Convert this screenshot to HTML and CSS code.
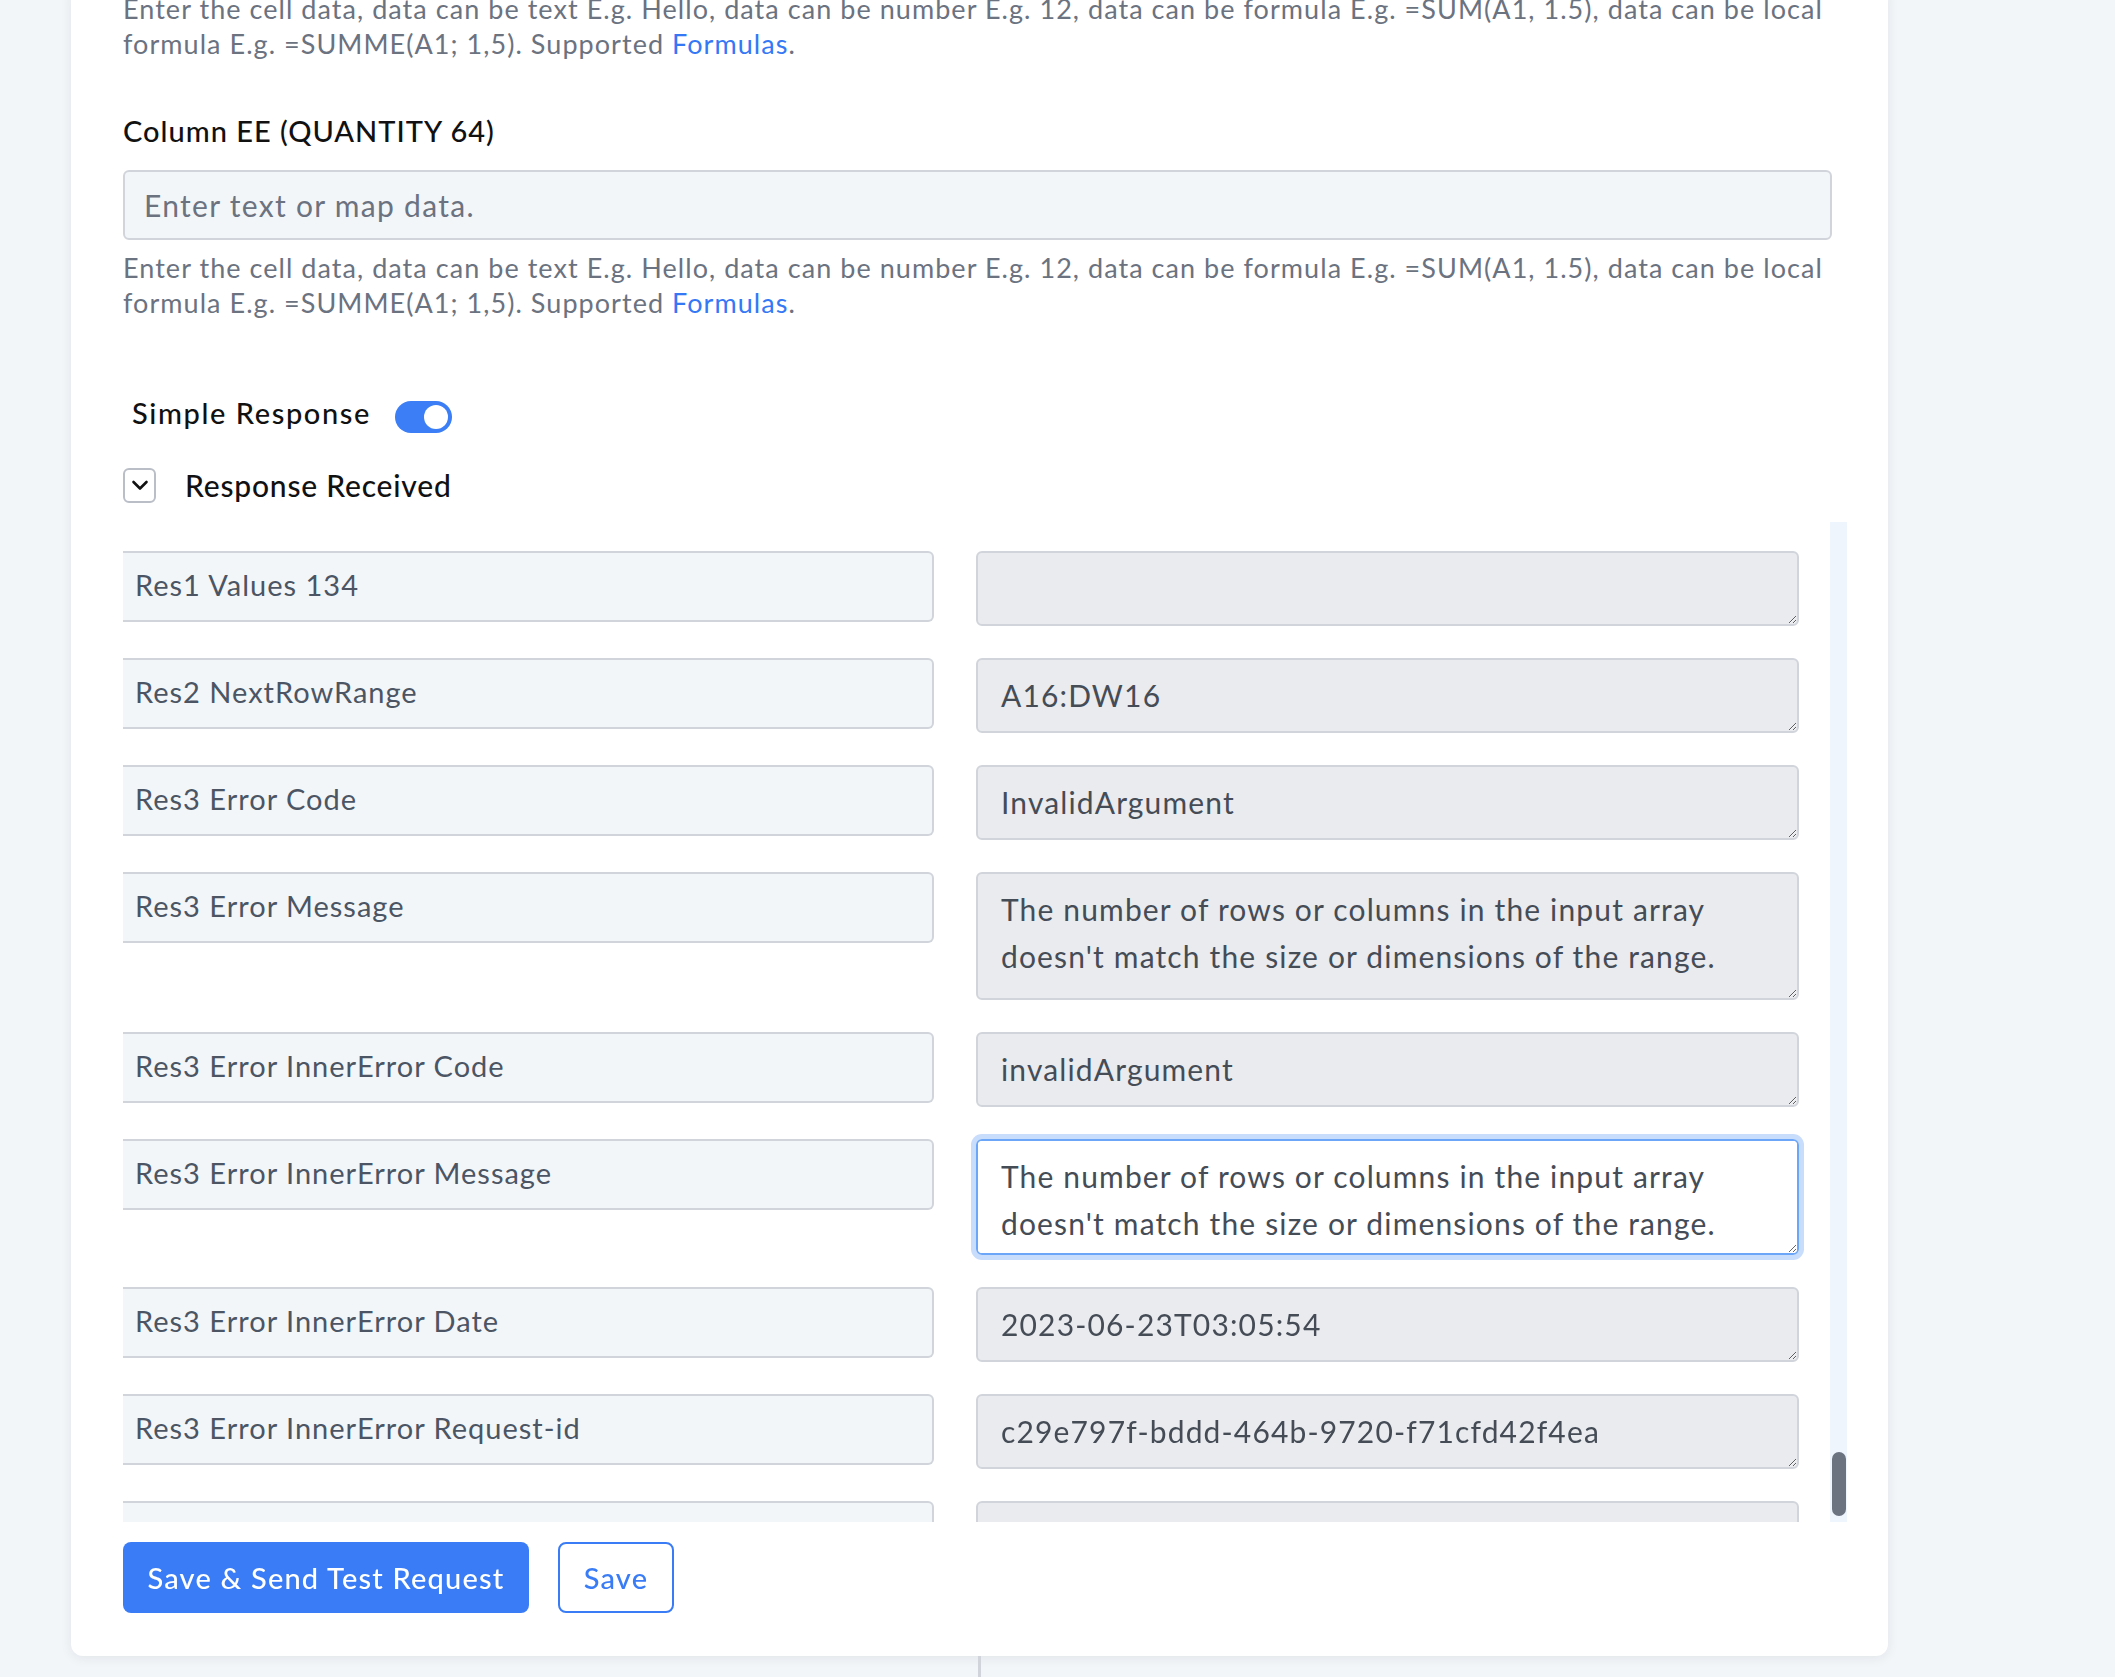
FILE: index.html
```html
<!DOCTYPE html>
<html lang="en">
<head>
  <meta charset="UTF-8">
  <meta name="viewport" content="width=device-width, initial-scale=1.0">
  <title>Update Row - Excel Action</title>
  <link rel="stylesheet" href="styles.css">
</head>
<body>
  <div class="card">
    <p class="help">Enter the cell data, data can be text E.g. Hello, data can be number E.g. 12, data can be formula E.g. =SUM(A1, 1.5), data can be local formula E.g. =SUMME(A1; 1,5). Supported <a href="#">Formulas</a>.</p>

    <label class="field-label" for="col-ee">Column EE (QUANTITY 64)</label>
    <input class="text-input" id="col-ee" type="text" placeholder="Enter text or map data.">
    <p class="help help-after">Enter the cell data, data can be text E.g. Hello, data can be number E.g. 12, data can be formula E.g. =SUM(A1, 1.5), data can be local formula E.g. =SUMME(A1; 1,5). Supported <a href="#">Formulas</a>.</p>

    <div class="toggle-row">
      <span class="toggle-label">Simple Response</span>
      <span class="toggle on"><span class="knob"></span></span>
    </div>

    <div class="section-head">
      <span class="chevron-box">
        <svg width="18" height="18" viewBox="0 0 18 18" fill="none" stroke="#111" stroke-width="2.6" stroke-linecap="round" stroke-linejoin="round"><path d="M2.5 6l6.5 6.5 6.5-6.5"/></svg>
      </span>
      <span class="section-title">Response Received</span>
    </div>

    <div class="response-box">
      <div class="response-list">
        <div class="response-row">
          <input class="key" type="text" value="Res1 Values 134" readonly>
          <textarea class="val" readonly></textarea>
        </div>
        <div class="response-row">
          <input class="key" type="text" value="Res2 NextRowRange" readonly>
          <textarea class="val" readonly>A16:DW16</textarea>
        </div>
        <div class="response-row">
          <input class="key" type="text" value="Res3 Error Code" readonly>
          <textarea class="val" readonly>InvalidArgument</textarea>
        </div>
        <div class="response-row">
          <input class="key" type="text" value="Res3 Error Message" readonly>
          <textarea class="val val-tall" readonly>The number of rows or columns in the input array doesn't match the size or dimensions of the range.</textarea>
        </div>
        <div class="response-row">
          <input class="key" type="text" value="Res3 Error InnerError Code" readonly>
          <textarea class="val" readonly>invalidArgument</textarea>
        </div>
        <div class="response-row">
          <input class="key" type="text" value="Res3 Error InnerError Message" readonly>
          <textarea class="val val-focus" readonly>The number of rows or columns in the input array doesn't match the size or dimensions of the range.</textarea>
        </div>
        <div class="response-row">
          <input class="key" type="text" value="Res3 Error InnerError Date" readonly>
          <textarea class="val" readonly>2023-06-23T03:05:54</textarea>
        </div>
        <div class="response-row">
          <input class="key" type="text" value="Res3 Error InnerError Request-id" readonly>
          <textarea class="val" readonly>c29e797f-bddd-464b-9720-f71cfd42f4ea</textarea>
        </div>
        <div class="response-row">
          <input class="key" type="text" value="Res3 Error InnerError Client-request-id" readonly>
          <textarea class="val" readonly>c29e797f-bddd-464b-9720-f71cfd42f4ea</textarea>
        </div>
      </div>
      <div class="scroll-track"><div class="scroll-thumb"></div></div>
    </div>

    <div class="actions">
      <button class="btn btn-primary" type="button">Save &amp; Send Test Request</button>
      <button class="btn btn-outline" type="button">Save</button>
    </div>
  </div>
  <div class="column-rule"></div>
</body>
</html>
```

FILE: styles.css
```css
body {
  margin: 0;
  background: #f3f6f9;
  font-family: Lato, "Noto Sans", sans-serif;
  color: #111;
  overflow: hidden;
}

.card {
  box-sizing: border-box;
  width: 1817px;
  margin: -9px 0 0 71px;
  padding: 0 56px 43px 52px;
  background: #fff;
  border-radius: 0 0 12px 12px;
  box-shadow: 0 2px 12px rgba(17, 24, 39, 0.08);
}

.help {
  margin: 0;
  font-size: 27px;
  line-height: 35px;
  letter-spacing: 1.05px;
  color: #6b7280;
}
.help a {
  color: #3478f6;
  text-decoration: none;
}
.help-after {
  margin-top: 10px;
}

.field-label {
  display: block;
  margin-top: 50px;
  font-size: 29px;
  line-height: 40px;
  letter-spacing: 1px;
  font-weight: 500;
  color: #111;
}

.text-input {
  display: block;
  box-sizing: border-box;
  width: 100%;
  height: 70px;
  margin-top: 19px;
  padding: 0 19px;
  border: 2px solid #d1d5db;
  border-radius: 6px;
  background: #f3f6f9;
  font-family: inherit;
  font-size: 30px;
  letter-spacing: 1.3px;
  color: #374151;
}
.text-input::placeholder {
  color: #6b7280;
}

.toggle-row {
  display: flex;
  align-items: center;
  gap: 24px;
  margin-top: 81px;
  padding-left: 9px;
  height: 32px;
}
.toggle-label {
  padding-bottom: 10px;
  font-size: 29px;
  letter-spacing: 1.6px;
  font-weight: 500;
}
.toggle {
  display: flex;
  align-items: center;
  box-sizing: border-box;
  width: 57px;
  height: 32px;
  padding: 4px;
  border-radius: 16px;
  background: #d1d5db;
}
.toggle.on {
  justify-content: flex-end;
  background: #3b7ef6;
}
.knob {
  width: 24px;
  height: 24px;
  border-radius: 50%;
  background: #fff;
}

.section-head {
  display: flex;
  align-items: center;
  gap: 29px;
  margin-top: 34px;
}
.chevron-box {
  display: flex;
  align-items: center;
  justify-content: center;
  box-sizing: border-box;
  width: 33px;
  height: 35px;
  border: 2px solid #b9bec7;
  border-radius: 6px;
}
.section-title {
  font-size: 30px;
  letter-spacing: 0.8px;
  font-weight: 500;
}

/* response list with its own scrollbar on the right */
.response-box {
  display: flex;
  width: 1724px;
  height: 1000px;
  margin-top: 19px;
}
.response-list {
  flex: 1;
  overflow: hidden;
  padding-top: 29px;
  display: flex;
  flex-direction: column;
  gap: 32px;
}
.response-row {
  display: grid;
  grid-template-columns: 811px 823px;
  column-gap: 42px;
  align-items: start;
}
.key {
  box-sizing: border-box;
  height: 71px;
  padding: 0 12px 4px;
  border: 2px solid #d1d5db;
  border-left: none;
  border-radius: 0 6px 6px 0;
  background: #f3f6f9;
  font-family: inherit;
  font-size: 29px;
  letter-spacing: 1px;
  color: #4b5563;
  outline: none;
}
.val {
  display: block;
  box-sizing: border-box;
  width: 100%;
  height: 75px;
  margin: 0;
  padding: 12px 23px;
  border: 2px solid #d1d5db;
  border-radius: 6px;
  background: #e9ebef;
  font-family: inherit;
  font-size: 30px;
  line-height: 47px;
  letter-spacing: 1.15px;
  color: #454c56;
  resize: vertical;
  outline: none;
}
.val-tall {
  height: 128px;
}
.val-focus {
  height: 116px;
  background: #fff;
  border-color: #6ba6f8;
  box-shadow: 0 0 0 5px #c8dcfc;
}

.scroll-track {
  width: 17px;
  flex-shrink: 0;
  background: #eef5fd;
}
.scroll-thumb {
  width: 14px;
  height: 64px;
  margin: 930px 0 0 2px;
  border-radius: 7px;
  background: #6b7280;
}

.actions {
  display: flex;
  gap: 29px;
  margin-top: 20px;
}
.btn {
  box-sizing: border-box;
  height: 71px;
  border-radius: 8px;
  font-family: inherit;
  font-size: 29px;
  letter-spacing: 1.2px;
  font-weight: 500;
  cursor: pointer;
}
.btn-primary {
  width: 406px;
  border: none;
  background: #3a7cf6;
  color: #fff;
}
.btn-outline {
  width: 116px;
  border: 2px solid #3a7cf6;
  background: #fff;
  color: #3a7cf6;
}

.column-rule {
  width: 3px;
  height: 40px;
  margin-left: 978px;
  background: #d1d5db;
}
```
